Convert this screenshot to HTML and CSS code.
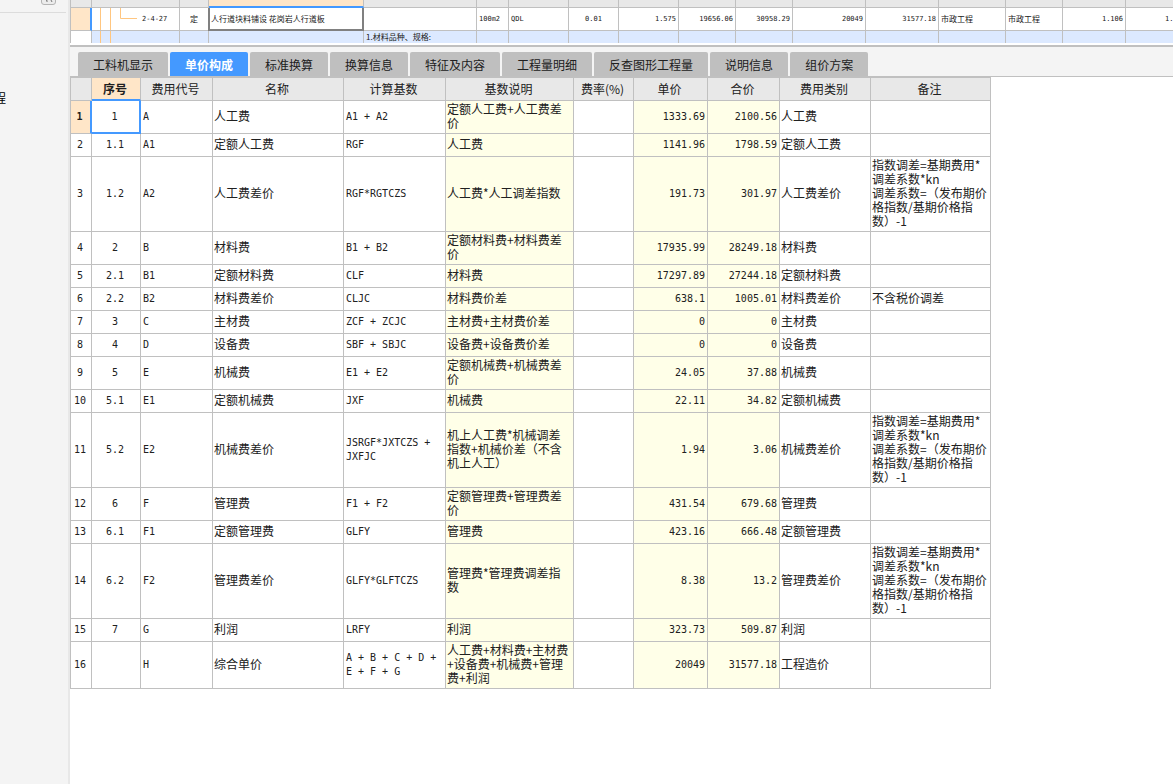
FILE: index.html
```html
<!DOCTYPE html>
<html lang="zh-CN">
<head>
<meta charset="utf-8">
<title>单价构成</title>
<link rel="stylesheet" href="styles.css">
</head>
<body>
<aside class="sidebar">
  <div class="sidebar-head">
    <button class="collapse" type="button" aria-label="收起">
      <svg width="9" height="9" viewBox="0 0 9 9"><path d="M1 5L3 2.500M3 2.500L3 7.500M6 5L8 2.500M1 5L3 8M3 8V9M6 5L8 9" fill="none" stroke="#777"/></svg>
    </button>
  </div>
  <div class="tree-node"><span>程</span></div>
</aside>
<main class="main">
  <section class="bill">
    <table class="bill-grid">
      <colgroup><col class="b0"><col class="b1"><col class="b2"><col class="b3"><col class="b4"><col class="b5"><col class="b6"><col class="b7"><col class="b6"><col class="b9"><col class="b9"><col class="b11"><col class="b11"><col class="b13"><col class="b9"><col class="b15"><col class="b15"></colgroup>
      <tbody>
      <tr class="bill-head"><td></td><td></td><td></td><td class="picked"></td><td></td><td></td><td></td><td></td><td></td><td></td><td></td><td></td><td></td><td></td><td></td><td></td><td></td></tr>
      <tr class="bill-row">
        <td class="marker"></td>
        <td class="branch"><div class="branch-in"><svg width="46" height="22" viewBox="0 0 46 22"><path d="M8.500 0V22M18.500 0V22M28.500 0V10.500H45" fill="none" stroke="#ffc680"/></svg><span class="mono">2-4-27</span></div></td>
        <td class="center">定</td>
        <td class="chosen">人行道块料铺设 花岗岩人行道板</td>
        <td></td>
        <td class="mono">100m2</td><td class="mono">QDL</td><td class="mono center">0.01</td>
        <td class="mono num">1.575</td><td class="mono num">19656.06</td><td class="mono num">30958.29</td><td class="mono num">20049</td><td class="mono num">31577.18</td>
        <td>市政工程</td><td>市政工程</td><td class="mono num">1.106</td><td class="mono num">1.106</td>
      </tr>
      <tr class="bill-note">
        <td class="blank"></td>
        <td class="branch"><div class="branch-in"><svg width="46" height="12" viewBox="0 0 46 12"><path d="M8.500 0V12M18.500 0V12" fill="none" stroke="#ffc680"/></svg></div></td>
        <td></td><td></td><td>1.材料品种、规格:</td><td></td><td></td><td></td><td></td><td></td><td></td><td></td><td></td><td></td><td></td><td></td><td></td>
      </tr>
      </tbody>
    </table>
  </section>
  <nav class="tabs">
    <button type="button">工料机显示</button>
    <button type="button" class="active">单价构成</button>
    <button type="button">标准换算</button>
    <button type="button">换算信息</button>
    <button type="button">特征及内容</button>
    <button type="button">工程量明细</button>
    <button type="button">反查图形工程量</button>
    <button type="button">说明信息</button>
    <button type="button">组价方案</button>
  </nav>
  <section class="detail">
    <table class="fees">
      <colgroup><col class="c0"><col class="c1"><col class="c2"><col class="c3"><col class="c4"><col class="c5"><col class="c6"><col class="c7"><col class="c8"><col class="c9"><col class="c10"></colgroup>
      <thead>
        <tr><th></th><th class="picked">序号</th><th>费用代号</th><th>名称</th><th>计算基数</th><th>基数说明</th><th>费率(%)</th><th>单价</th><th>合价</th><th>费用类别</th><th>备注</th></tr>
      </thead>
      <tbody>
        <tr class="current"><th>1</th><td class="seq">1</td><td class="mono">A</td><td>人工费</td><td class="mono">A1 + A2</td><td class="calc">定额人工费+人工费差价</td><td></td><td class="calc num">1333.69</td><td class="calc num">2100.56</td><td>人工费</td><td></td></tr>
        <tr><th>2</th><td class="seq">1.1</td><td class="mono">A1</td><td>定额人工费</td><td class="mono">RGF</td><td class="calc">人工费</td><td></td><td class="calc num">1141.96</td><td class="calc num">1798.59</td><td>定额人工费</td><td></td></tr>
        <tr><th>3</th><td class="seq">1.2</td><td class="mono">A2</td><td>人工费差价</td><td class="mono">RGF*RGTCZS</td><td class="calc">人工费*人工调差指数</td><td></td><td class="calc num">191.73</td><td class="calc num">301.97</td><td>人工费差价</td><td>指数调差=基期费用*调差系数*kn<br>调差系数=（发布期价格指数/基期价格指数）-1</td></tr>
        <tr><th>4</th><td class="seq">2</td><td class="mono">B</td><td>材料费</td><td class="mono">B1 + B2</td><td class="calc">定额材料费+材料费差价</td><td></td><td class="calc num">17935.99</td><td class="calc num">28249.18</td><td>材料费</td><td></td></tr>
        <tr><th>5</th><td class="seq">2.1</td><td class="mono">B1</td><td>定额材料费</td><td class="mono">CLF</td><td class="calc">材料费</td><td></td><td class="calc num">17297.89</td><td class="calc num">27244.18</td><td>定额材料费</td><td></td></tr>
        <tr><th>6</th><td class="seq">2.2</td><td class="mono">B2</td><td>材料费差价</td><td class="mono">CLJC</td><td class="calc">材料费价差</td><td></td><td class="calc num">638.1</td><td class="calc num">1005.01</td><td>材料费差价</td><td>不含税价调差</td></tr>
        <tr><th>7</th><td class="seq">3</td><td class="mono">C</td><td>主材费</td><td class="mono">ZCF + ZCJC</td><td class="calc">主材费+主材费价差</td><td></td><td class="calc num">0</td><td class="calc num">0</td><td>主材费</td><td></td></tr>
        <tr><th>8</th><td class="seq">4</td><td class="mono">D</td><td>设备费</td><td class="mono">SBF + SBJC</td><td class="calc">设备费+设备费价差</td><td></td><td class="calc num">0</td><td class="calc num">0</td><td>设备费</td><td></td></tr>
        <tr><th>9</th><td class="seq">5</td><td class="mono">E</td><td>机械费</td><td class="mono">E1 + E2</td><td class="calc">定额机械费+机械费差价</td><td></td><td class="calc num">24.05</td><td class="calc num">37.88</td><td>机械费</td><td></td></tr>
        <tr><th>10</th><td class="seq">5.1</td><td class="mono">E1</td><td>定额机械费</td><td class="mono">JXF</td><td class="calc">机械费</td><td></td><td class="calc num">22.11</td><td class="calc num">34.82</td><td>定额机械费</td><td></td></tr>
        <tr><th>11</th><td class="seq">5.2</td><td class="mono">E2</td><td>机械费差价</td><td class="mono">JSRGF*JXTCZS + JXFJC</td><td class="calc">机上人工费*机械调差指数+机械价差（不含机上人工）</td><td></td><td class="calc num">1.94</td><td class="calc num">3.06</td><td>机械费差价</td><td>指数调差=基期费用*调差系数*kn<br>调差系数=（发布期价格指数/基期价格指数）-1</td></tr>
        <tr><th>12</th><td class="seq">6</td><td class="mono">F</td><td>管理费</td><td class="mono">F1 + F2</td><td class="calc">定额管理费+管理费差价</td><td></td><td class="calc num">431.54</td><td class="calc num">679.68</td><td>管理费</td><td></td></tr>
        <tr><th>13</th><td class="seq">6.1</td><td class="mono">F1</td><td>定额管理费</td><td class="mono">GLFY</td><td class="calc">管理费</td><td></td><td class="calc num">423.16</td><td class="calc num">666.48</td><td>定额管理费</td><td></td></tr>
        <tr><th>14</th><td class="seq">6.2</td><td class="mono">F2</td><td>管理费差价</td><td class="mono">GLFY*GLFTCZS</td><td class="calc">管理费*管理费调差指数</td><td></td><td class="calc num">8.38</td><td class="calc num">13.2</td><td>管理费差价</td><td>指数调差=基期费用*调差系数*kn<br>调差系数=（发布期价格指数/基期价格指数）-1</td></tr>
        <tr><th>15</th><td class="seq">7</td><td class="mono">G</td><td>利润</td><td class="mono">LRFY</td><td class="calc">利润</td><td></td><td class="calc num">323.73</td><td class="calc num">509.87</td><td>利润</td><td></td></tr>
        <tr><th>16</th><td class="seq"></td><td class="mono">H</td><td>综合单价</td><td class="mono">A + B + C + D + E + F + G</td><td class="calc">人工费+材料费+主材费+设备费+机械费+管理费+利润</td><td></td><td class="calc num">20049</td><td class="calc num">31577.18</td><td>工程造价</td><td></td></tr>
      </tbody>
    </table>
  </section>
</main>
</body>
</html>
```
FILE: styles.css
```css
* { box-sizing: border-box; }

body {
  margin: 0;
  min-height: 100vh;
  display: flex;
  background: #fff;
  color: #202020;
  font: 12px/14px "Noto Sans CJK SC", sans-serif;
  overflow: hidden;
}

.sidebar {
  flex: 0 0 70px;
  background: #f4f4f4;
  border-right: 2px solid #e8e8e8;
}

.sidebar-head {
  height: 13px;
  margin-right: 2px;
  padding: 0 10px 7px 0;
  border-bottom: 1px solid #dcdcdc;
  display: flex;
  justify-content: flex-end;
  align-items: flex-end;
}

.collapse {
  flex: none;
  width: 15px;
  height: 15px;
  padding: 0;
  border: 1px solid #b4b4b4;
  border-radius: 3px;
  background: #ececec;
  display: flex;
  align-items: center;
  justify-content: center;
}

.tree-node {
  margin-top: 78px;
  width: 6px;
  overflow: hidden;
  display: flex;
  justify-content: flex-end;
  color: #000;
}

.main {
  flex: 1;
  min-width: 0;
}

table {
  table-layout: fixed;
  border-collapse: separate;
  border-spacing: 0;
}

td, th {
  border: 0 solid #c0c0c0;
  border-width: 0 1px 1px 0;
}

.mono, .num, .seq, .fees tbody th {
  font-family: "DejaVu Sans Mono", monospace;
  font-size: 10px;
}

.num { text-align: right; }

.center, .seq { text-align: center; }

/* bill grid */
.bill {
  height: 47px;
  overflow: hidden;
  border-bottom: 2px solid #c0c0c0;
}

.bill-grid {
  width: 1119px;
  border-left: 1px solid #c0c0c0;
  font-size: 8px;
  line-height: 10px;
}

.bill-grid td {
  padding: 0 2px;
  white-space: nowrap;
}

.bill-grid .mono { font-size: 7px; }

.bill-head td {
  height: 8px;
  background: #e8e8e8;
}

.bill-head .picked {
  background: #ffe6c8;
  border-bottom: 2px solid #4499ff;
}

.bill-row td { height: 23px; }

.bill-row .marker {
  background: #ffe6c8;
  border-right: 2px solid #4499ff;
}

.bill-row .chosen {
  border-right: 2px solid #808080;
  border-bottom: 2px solid #808080;
  box-shadow: -1px 0 #808080, inset 1px 0 #808080;
}

.bill-note td {
  height: 12px;
  background: #dce9ff;
  border-bottom: 0;
}

.bill-note .blank { background: #fff; }

.bill-grid .branch { padding: 0; }

.branch-in {
  display: flex;
  align-items: center;
  gap: 4px;
}

.branch-in svg { display: block; }

.b0 { width: 21px; }
.b1 { width: 88px; }
.b2 { width: 29px; }
.b3 { width: 155px; }
.b4 { width: 113px; }
.b5 { width: 32px; }
.b6 { width: 60px; }
.b7 { width: 50px; }
.b9 { width: 57px; }
.b11 { width: 73px; }
.b13 { width: 67px; }
.b15 { width: 63px; }

/* tabs */
.tabs {
  display: flex;
  gap: 2px;
  padding: 5px 8px 0;
  background: #f4f4f4;
  border-bottom: 1px solid #c0c0c0;
}

.tabs button {
  height: 24px;
  padding: 2px 15px 0;
  border: 0;
  border-radius: 2px 2px 0 0;
  background: #bfbfbf;
  color: #202020;
  font: inherit;
  white-space: nowrap;
}

.tabs .active {
  background: #4499ff;
  color: #fff;
  font-weight: bold;
}

/* fee table */
.fees {
  width: 921px;
  border-left: 1px solid #c0c0c0;
  border-top: 1px solid #c0c0c0;
}

.fees td, .fees th { height: 23px; }

.fees th {
  padding: 2px 2px 2px 0;
  font-weight: normal;
}

.fees td { padding: 1px 2px 3px 1px; }

.fees .mono, .fees .num, .fees .seq { padding: 2px; }

.fees .seq { padding-left: 0; }

.fees thead th { background: #e8e8e8; }

.fees thead .picked {
  background: #ffe6c8;
  border-bottom: 2px solid #4499ff;
  font-weight: bold;
}

.fees .current th {
  background: #ffe6c8;
  border-right: 2px solid #4499ff;
  font-weight: bold;
}

.fees .current .seq {
  border-right: 2px solid #4499ff;
  border-bottom: 2px solid #4499ff;
}

.fees .calc { background: #ffffe8; }

.c0 { width: 21px; }
.c1 { width: 49px; }
.c2 { width: 72px; }
.c3 { width: 131px; }
.c4 { width: 102px; }
.c5 { width: 128px; }
.c6 { width: 60px; }
.c7 { width: 74px; }
.c8 { width: 72px; }
.c9 { width: 91px; }
.c10 { width: 120px; }
```
